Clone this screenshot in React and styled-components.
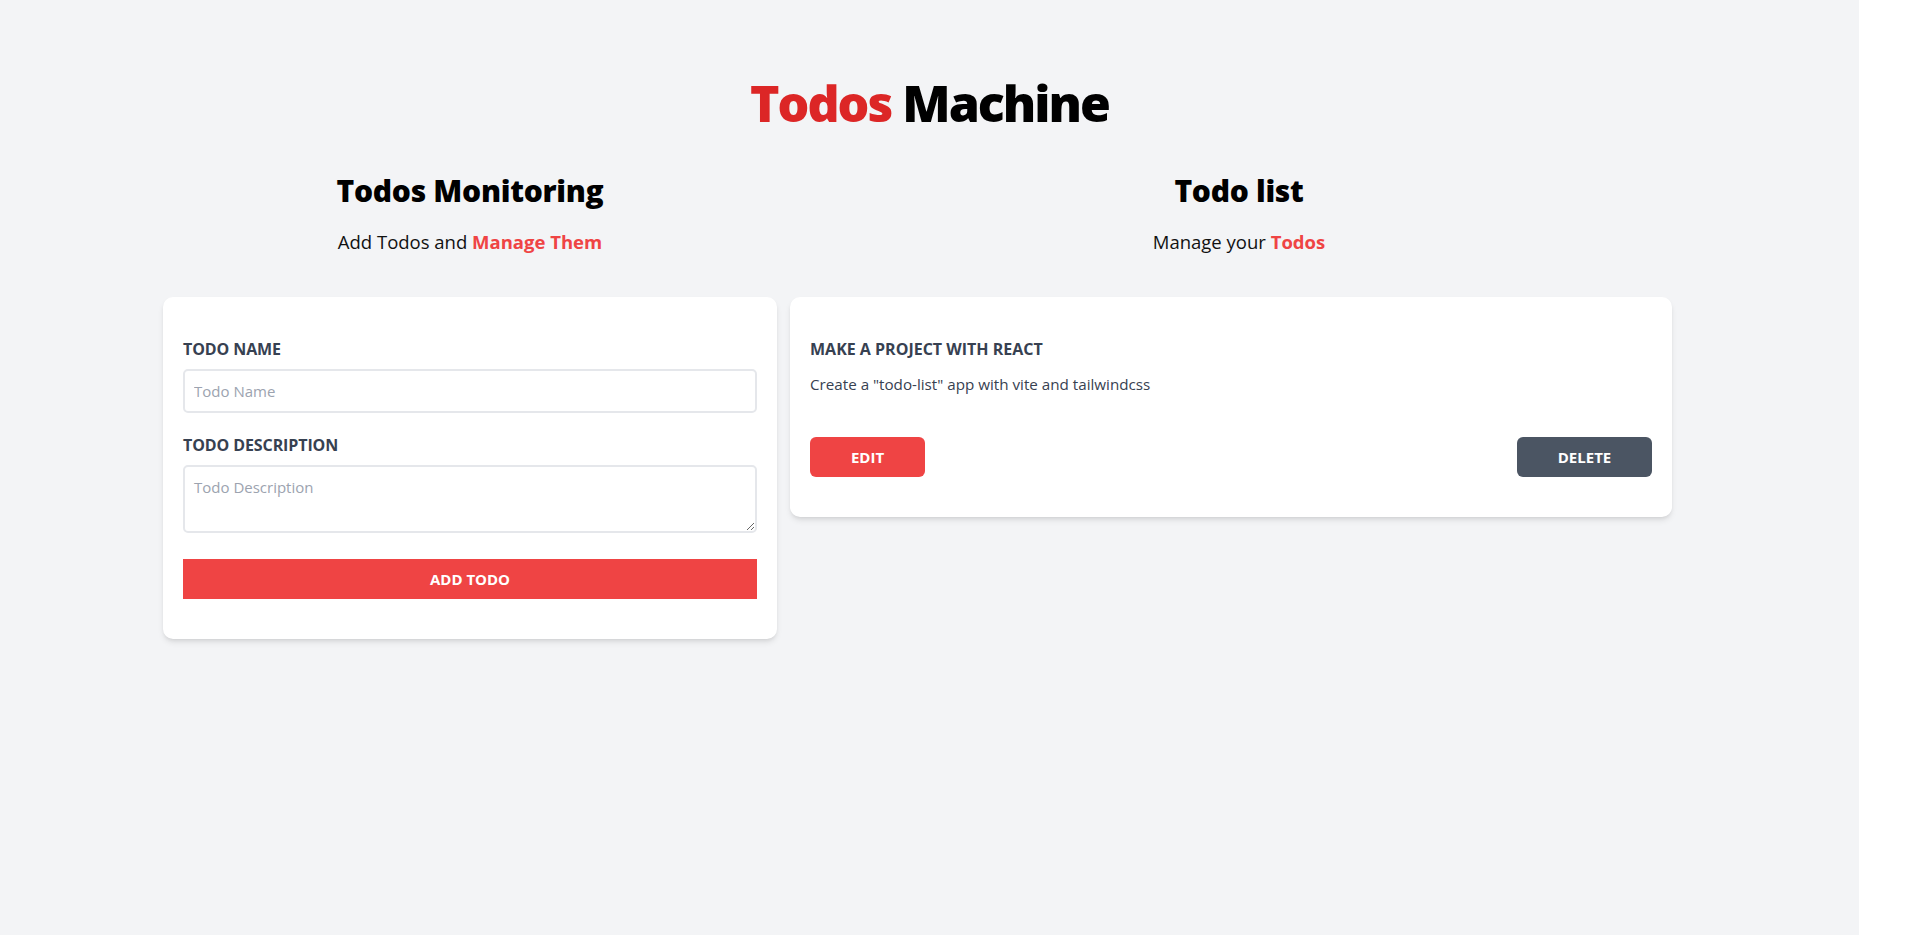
import React from 'react';
import styled, {createGlobalStyle} from 'styled-components';

const GlobalStyle = createGlobalStyle`
    * {
        box-sizing: border-box;
    }

    body {
        margin: 0;
        background-color: #ffffff;
        font-family: 'Open Sans', 'Noto Sans', sans-serif;
    }
`;

const Page = styled.div`
    width: 1859px;
    min-height: 100vh;
    padding-top: 72px;
    background-color: #f3f4f6;
`;

const Title = styled.h1`
    margin: 0;
    font-size: 50px;
    line-height: 62px;
    font-weight: 800;
    text-align: center;
    color: #000000;
    letter-spacing: -2px;
`;

const Red = styled.span`
    color: ${props => props.$strong ? '#ef4444' : '#dc2626'};
    font-weight: ${props => props.$strong ? 700 : 'inherit'};
`;

const Columns = styled.div`
    display: flex;
    align-items: flex-start;
    gap: 13px;
    padding-left: 163px;
    margin-top: 39px;
`;

const Column = styled.section`
    display: flex;
    flex-direction: column;
    width: ${props => props.$width}px;
`;

const ColumnTitle = styled.h2`
    margin: 0;
    font-size: 30px;
    line-height: 36px;
    font-weight: 800;
    text-align: center;
    color: #000000;
    letter-spacing: -0.3px;
`;

const ColumnText = styled.p`
    margin: 19px 0 0;
    font-size: 18.5px;
    line-height: 28px;
    text-align: center;
    color: #111111;
`;

const Card = styled.div`
    width: ${props => props.$width}px;
    margin-top: 41px;
    padding: 40px 20px;
    background-color: #ffffff;
    border-radius: 10px;
    box-shadow: 0 4px 6px -1px rgba(0, 0, 0, 0.1), 0 2px 4px -2px rgba(0, 0, 0, 0.1);
`;

const Field = styled.div`
    display: flex;
    flex-direction: column;
    margin-bottom: 20px;
`;

const Label = styled.label`
    font-size: 16px;
    line-height: 24px;
    font-weight: 700;
    text-transform: uppercase;
    color: #374151;
    margin-bottom: 8px;
    letter-spacing: -0.1px;
`;

const Input = styled.input`
    width: 100%;
    height: 44px;
    padding: 0 9px;
    font-family: inherit;
    font-size: 15px;
    color: #374151;
    border: 2px solid #e5e7eb;
    border-radius: 5px;
    outline: none;

    &::placeholder {
        color: #9ca3af;
    }
`;

const TextArea = styled.textarea`
    display: block;
    width: 100%;
    height: 68px;
    padding: 9px 9px;
    font-family: inherit;
    font-size: 15px;
    line-height: 22px;
    color: #374151;
    border: 2px solid #e5e7eb;
    border-radius: 5px;
    outline: none;

    &::placeholder {
        color: #9ca3af;
    }
`;

const AddButton = styled.button`
    display: block;
    width: 100%;
    height: 40px;
    margin-top: 26px;
    border: none;
    background-color: #ef4444;
    color: #ffffff;
    font-family: inherit;
    font-size: 15px;
    font-weight: 700;
    text-transform: uppercase;
    cursor: pointer;
`;

const TodoTitle = styled.h3`
    margin: 0;
    font-size: 16px;
    line-height: 24px;
    font-weight: 700;
    text-transform: uppercase;
    color: #374151;
`;

const TodoText = styled.p`
    margin: 11px 0 0;
    font-size: 15.2px;
    line-height: 24px;
    color: #374151;
`;

const Actions = styled.div`
    display: flex;
    justify-content: space-between;
    margin-top: 41px;
`;

const ActionButton = styled.button`
    width: ${props => props.$width}px;
    height: 40px;
    border: none;
    border-radius: 6px;
    background-color: ${props => props.$dark ? '#4b5563' : '#ef4444'};
    color: #ffffff;
    font-family: inherit;
    font-size: 15px;
    font-weight: 700;
    text-transform: uppercase;
    cursor: pointer;
`;

export default function App() {
    return (
        <React.Fragment>
            <GlobalStyle />
            <Page>
                <Title><Red>Todos</Red> Machine</Title>

                <Columns>
                    <Column $width={614}>
                        <ColumnTitle>Todos Monitoring</ColumnTitle>
                        <ColumnText>Add Todos and <Red $strong>Manage Them</Red></ColumnText>

                        <Card $width={614}>
                            <Field>
                                <Label htmlFor='todo-name'>Todo Name</Label>
                                <Input id='todo-name' placeholder='Todo Name' />
                            </Field>
                            <Field>
                                <Label htmlFor='todo-description'>Todo Description</Label>
                                <TextArea id='todo-description' placeholder='Todo Description' />
                            </Field>
                            <AddButton>Add Todo</AddButton>
                        </Card>
                    </Column>

                    <Column $width={898}>
                        <ColumnTitle>Todo list</ColumnTitle>
                        <ColumnText>Manage your <Red $strong>Todos</Red></ColumnText>

                        <Card $width={882}>
                            <TodoTitle>Make a project with react</TodoTitle>
                            <TodoText>Create a "todo-list" app with vite and tailwindcss</TodoText>
                            <Actions>
                                <ActionButton $width={115}>Edit</ActionButton>
                                <ActionButton $width={135} $dark>Delete</ActionButton>
                            </Actions>
                        </Card>
                    </Column>
                </Columns>
            </Page>
        </React.Fragment>
    );
}
